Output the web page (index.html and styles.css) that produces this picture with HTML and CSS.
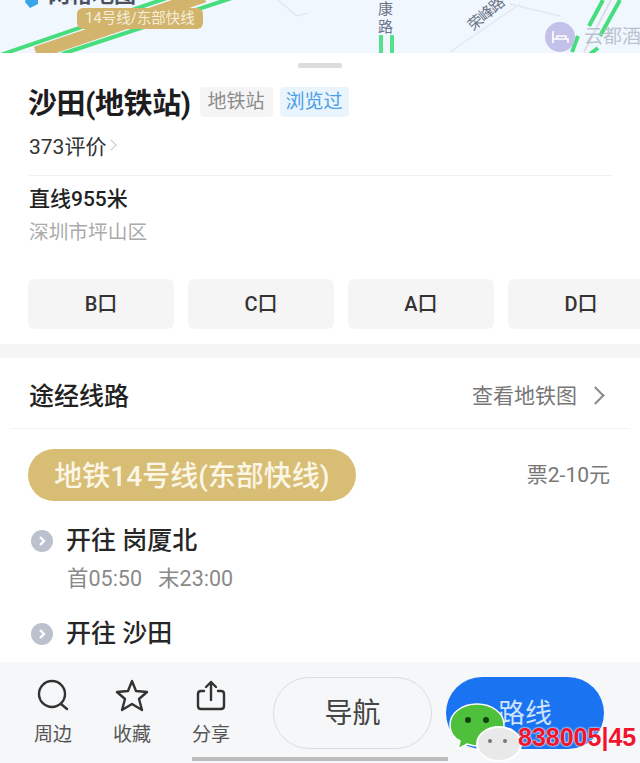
FILE: index.html
```html
<!DOCTYPE html>
<html lang="zh">
<head>
    <meta charset="UTF-8">
    <meta name="viewport" content="width=device-width, initial-scale=1.0">
    <title>沙田(地铁站)</title>
    <link rel="stylesheet" href="styles.css">
</head>
<body>
<div class="screen">

    <!-- Map -->
    <div class="map">
        <svg class="map-art" width="640" height="70" viewBox="0 0 640 70">
            <path d="M0 55 L167 -2" stroke="#46dd7c" stroke-width="4" fill="none"/>
            <path d="M62 54 L232 -2" stroke="#46dd7c" stroke-width="4" fill="none"/>
            <path d="M36 53 L204 -4" stroke="#d2b46c" stroke-width="13" fill="none"/>
            <path d="M381 35 V56 M392 35 V56" stroke="#55e089" stroke-width="4" fill="none"/>
            <path d="M603 0 L589 26 M620 0 L600 36 M578 36 L572 52 M598 48 L590 54" stroke="#46dd7c" stroke-width="4" fill="none"/>
            <path d="M611 0 L584 52" stroke="#dcdfe6" stroke-width="2" fill="none"/>
            <path d="M278 0 L297 16 L308 13 M450 52 L520 4 M510 4 L560 16" stroke="#e3e8f0" stroke-width="1.5" fill="none"/>
            <circle cx="560" cy="37" r="15" fill="#c3c0ea"/>
            <path d="M553 31 V43 M553 39 H568 V43 M557 36 H566 V39 H557 Z" stroke="#fff" stroke-width="1.6" fill="none"/>
            <path d="M27 -6 L38 -2 L38 4 L30 8 L25 2 Z" fill="#3ba5ea"/>
        </svg>
        <span class="map-title">网格地图</span>
        <span class="line-tag">14号线/东部快线</span>
        <span class="road road-kang">康<br>路</span>
        <span class="road road-rong">荣峰路</span>
        <span class="road road-hotel">云都酒</span>
    </div>

    <!-- Station sheet -->
    <div class="sheet">
        <div class="handle"></div>
        <div class="info">
            <div class="title-row">
                <h1>沙田(地铁站)</h1>
                <span class="tag">地铁站</span>
                <span class="tag tag-blue">浏览过</span>
            </div>
            <div class="reviews">373评价<span class="reviews-arrow"></span></div>
            <div class="info-line"></div>
            <div class="distance">直线955米</div>
            <div class="address">深圳市坪山区</div>
        </div>
        <div class="exits">
            <div class="exit">B口</div>
            <div class="exit">C口</div>
            <div class="exit">A口</div>
            <div class="exit">D口</div>
        </div>

        <div class="band"></div>

        <div class="lines-head">
            <h2>途经线路</h2>
            <div class="map-link">查看地铁图<span class="map-link-arrow"></span></div>
        </div>

        <div class="line-row">
            <div class="line-pill">地铁14号线(东部快线)</div>
            <div class="fare">票2-10元</div>
        </div>

        <div class="direction">
            <span class="dir-dot"><svg width="10" height="12" viewBox="0 0 10 12"><path d="M3 2 L7 6 L3 10" stroke="#fff" stroke-width="2.4" fill="none"/></svg></span>
            <span class="dir-name">开往 岗厦北</span>
        </div>
        <div class="times"><span>首05:50</span><span>末23:00</span></div>
        <div class="direction direction-next">
            <span class="dir-dot"><svg width="10" height="12" viewBox="0 0 10 12"><path d="M3 2 L7 6 L3 10" stroke="#fff" stroke-width="2.4" fill="none"/></svg></span>
            <span class="dir-name">开往 沙田</span>
        </div>
    </div>

    <!-- Bottom bar -->
    <div class="bottom-bar">
        <div class="tool">
            <svg width="36" height="34" viewBox="0 0 36 34" fill="none" stroke="#333" stroke-width="2.4" stroke-linecap="round">
                <circle cx="17" cy="15" r="13"/>
                <path d="M26 25 L32 30"/>
            </svg>
            <span>周边</span>
        </div>
        <div class="tool">
            <svg width="36" height="34" viewBox="0 0 36 34" fill="none" stroke="#333" stroke-width="2.4" stroke-linejoin="round">
                <path d="M18 2 L22 12 L33 13 L25 20 L28 31 L18 25 L8 31 L11 20 L3 13 L14 12 Z"/>
            </svg>
            <span>收藏</span>
        </div>
        <div class="tool">
            <svg width="36" height="34" viewBox="0 0 36 34" fill="none" stroke="#333" stroke-width="2.4" stroke-linecap="round" stroke-linejoin="round">
                <path d="M11 12 H8 Q5 12 5 15 V27 Q5 30 8 30 H28 Q31 30 31 27 V15 Q31 12 28 12 H25"/>
                <path d="M18 21 V3 M13 8 L18 3 L23 8"/>
            </svg>
            <span>分享</span>
        </div>
        <div class="nav-btn">导航</div>
        <div class="route-btn">路线</div>
    </div>
    <div class="home-bar"></div>

    <!-- Watermark over the bar -->
    <div class="watermark">
        <svg width="74" height="60" viewBox="0 0 74 60">
            <path d="M28 1 C13 1 1 10 1 22 C1 29 5 35 11 38 L9 46 L18 41 C21 42 25 43 28 43 C43 43 55 34 55 22 C55 10 43 1 28 1 Z" fill="#4fc03c" stroke="#fff" stroke-width="1.5"/>
            <circle cx="19" cy="17" r="3" fill="#12400f"/>
            <circle cx="37" cy="17" r="3" fill="#12400f"/>
            <ellipse cx="50" cy="41" rx="22" ry="17" fill="#e9e9e9" stroke="#fff" stroke-width="2"/>
            <circle cx="41" cy="38" r="2" fill="#777"/>
            <circle cx="56" cy="38" r="2" fill="#777"/>
        </svg>
        <span class="watermark-num">838005|45</span>
    </div>
</div>
</body>
</html>
```

FILE: styles.css
```css
* {
    margin: 0;
    padding: 0;
    box-sizing: border-box;
    font-family: Roboto, "Noto Sans CJK SC", sans-serif;
}
body {
    background: #fff;
    overflow: hidden;
}
.screen {
    position: relative;
    width: 640px;
    height: 763px;
    overflow: hidden;
    display: flex;
    flex-direction: column;
    background: #fff;
}

/* map */
.map {
    position: relative;
    height: 53px;
    flex-shrink: 0;
    background: #f1f7fe;
    overflow: hidden;
}
.map-art {
    position: absolute;
    left: 0;
    top: 0;
}
.map-title {
    position: absolute;
    left: 48px;
    top: -24px;
    font-size: 22px;
    font-weight: bold;
    color: #4a5160;
}
.line-tag {
    position: absolute;
    left: 77px;
    top: 8px;
    width: 126px;
    height: 21px;
    line-height: 21px;
    text-align: center;
    font-size: 14.5px;
    white-space: nowrap;
    color: #f5eedb;
    background: #d2b46c;
    border-radius: 6px;
}
.road {
    position: absolute;
    font-size: 15px;
    color: #6b7486;
    line-height: 18px;
}
.road-kang {
    left: 378px;
    top: 0;
}
.road-rong {
    left: 465px;
    top: 5px;
    transform: rotate(-40deg);
    letter-spacing: -1px;
}
.road-hotel {
    left: 584px;
    top: 26px;
    width: 56px;
    font-size: 19px;
    line-height: 22px;
    height: 22px;
    overflow: hidden;
    white-space: nowrap;
    color: #b9c3d0;
}

/* sheet */
.sheet {
    flex: 1;
    min-height: 0;
    overflow: hidden;
    background: #fff;
    border-radius: 16px 16px 0 0;
    position: relative;
}
.handle {
    width: 44px;
    height: 5px;
    margin: 10px auto 0;
    background: #dcdcdc;
    border-radius: 3px;
}
.info {
    padding: 18px 28px 0 29px;
}
.title-row {
    display: flex;
    align-items: center;
    height: 32px;
}
.title-row h1 {
    font-size: 29px;
    font-weight: bold;
    color: #1d1d1f;
    margin: 0 9px 0 -1px;
    padding-bottom: 3px;
    letter-spacing: -0.4px;
    white-space: nowrap;
}
.tag {
    height: 30px;
    line-height: 30px;
    padding: 0 8px;
    margin-right: 7px;
    font-size: 19px;
    color: #8c8c8c;
    background: #f5f5f5;
    border-radius: 4px;
}
.tag-blue {
    padding: 0 6px;
    color: #4a9fe8;
    background: #eaf4fd;
}
.reviews {
    display: flex;
    align-items: center;
    margin-top: 15px;
    height: 24px;
    font-size: 21px;
    color: #333;
}
.reviews-arrow {
    width: 8px;
    height: 8px;
    margin-left: 1px;
    border-top: 1px solid #c8c8c8;
    border-right: 1px solid #c8c8c8;
    transform: rotate(45deg);
}
.info-line {
    height: 1px;
    margin-top: 18px;
    background: #f0f0f0;
}
.distance {
    margin-top: 11px;
    height: 24px;
    line-height: 24px;
    font-size: 21px;
    font-weight: 500;
    color: #222;
}
.address {
    margin-top: 10px;
    height: 24px;
    line-height: 24px;
    font-size: 19.7px;
    color: #ababab;
}
.exits {
    display: flex;
    gap: 14px;
    padding-left: 28px;
    margin-top: 34px;
}
.exit {
    flex: 0 0 146px;
    height: 50px;
    line-height: 50px;
    text-align: center;
    font-size: 20px;
    font-weight: 500;
    color: #333;
    background: #f5f5f5;
    border-radius: 6px;
}
.band {
    height: 14px;
    margin-top: 15px;
    background: #f5f5f5;
}
.lines-head {
    display: flex;
    justify-content: space-between;
    align-items: center;
    height: 71px;
    margin: 0 10px;
    padding: 1px 28px 0 19px;
    border-bottom: 1px solid #f3f3f3;
}
.lines-head h2 {
    font-size: 25px;
    font-weight: 500;
    color: #222;
}
.map-link {
    display: flex;
    align-items: center;
    font-size: 21px;
    color: #777;
}
.map-link-arrow {
    width: 13px;
    height: 13px;
    margin: 3px 0 0 12px;
    border-top: 2px solid #8a8a8a;
    border-right: 2px solid #8a8a8a;
    transform: rotate(45deg);
}
.line-row {
    display: flex;
    justify-content: space-between;
    align-items: center;
    padding: 20px 30px 0 28px;
}
.line-pill {
    width: 328px;
    height: 52px;
    line-height: 55px;
    text-align: center;
    font-size: 28px;
    font-weight: 500;
    color: #fbf6e6;
    background: #d8bd74;
    border-radius: 26px;
    white-space: nowrap;
}
.fare {
    font-size: 21px;
    color: #777;
    padding-bottom: 4px;
    margin-left: -2px;
}
.direction {
    display: flex;
    align-items: center;
    margin-top: 25px;
    padding-left: 31px;
}
.direction-next {
    margin-top: 26px;
}
.dir-dot {
    display: flex;
    align-items: center;
    justify-content: center;
    width: 22px;
    height: 22px;
    margin-right: 13px;
    border-radius: 50%;
    background: #bcc2cd;
}
.dir-name {
    font-size: 25px;
    font-weight: 500;
    color: #262626;
    line-height: 30px;
}
.times {
    display: flex;
    gap: 16px;
    margin-top: 9px;
    padding-left: 67px;
    font-size: 21.5px;
    line-height: 28px;
    color: #8a8a8a;
}

/* bottom bar */
.bottom-bar {
    display: flex;
    align-items: flex-start;
    flex-shrink: 0;
    height: 101px;
    padding: 15px 0 0 34px;
    background: #f6f7f9;
}
.tool {
    display: flex;
    flex-direction: column;
    align-items: center;
    width: 38px;
    margin-right: 41px;
    padding-top: 2px;
    font-size: 19px;
    color: #555;
}
.tool span {
    margin-top: 6px;
    white-space: nowrap;
}
.nav-btn {
    flex: 0 0 159px;
    height: 72px;
    line-height: 72px;
    margin: 0 14px 0 2px;
    text-align: center;
    font-size: 28px;
    color: #444;
    border: 1px solid #dcdcdc;
    border-radius: 36px;
}
.route-btn {
    flex: 0 0 158px;
    height: 72px;
    line-height: 74px;
    text-align: center;
    font-size: 27px;
    color: #cfe2ff;
    background: #1a73f0;
    border-radius: 36px;
}
.home-bar {
    position: absolute;
    left: 192px;
    bottom: 2px;
    width: 256px;
    height: 4px;
    background: #bdbdbd;
}

/* watermark */
.watermark {
    position: absolute;
    left: 449px;
    top: 703px;
    width: 191px;
    height: 60px;
}
.watermark-num {
    position: absolute;
    left: 69px;
    top: 19px;
    font-family: "Liberation Sans", sans-serif;
    font-size: 25px;
    line-height: 30px;
    font-weight: bold;
    color: #f0142d;
    text-shadow: 0 0 2px #fff, 0 0 2px #fff;
    white-space: nowrap;
}
```
